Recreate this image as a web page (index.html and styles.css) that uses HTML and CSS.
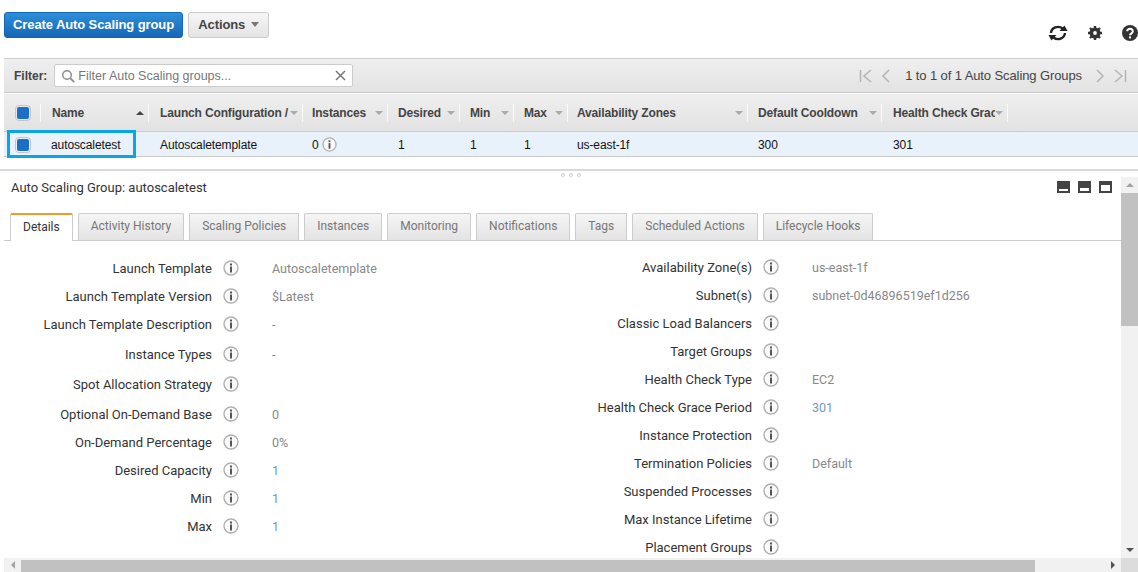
FILE: index.html
```html
<!DOCTYPE html>
<html lang="en">
<head>
    <meta charset="utf-8">
    <title>Auto Scaling Groups</title>
    <link rel="stylesheet" href="styles.css">
</head>
<body>
<svg class="defs" width="0" height="0">
    <symbol id="info" viewBox="0 0 16 16">
        <circle cx="8" cy="8" r="7" fill="#fafafa" stroke="#b0b0b0" stroke-width="1.4"/>
        <rect x="7" y="3.5" width="2" height="2" fill="#555"/>
        <rect x="7" y="6.5" width="2" height="6" fill="#555"/>
    </symbol>
</svg>
<div class="page">
    <div class="toolbar">
        <button class="btn btn-primary">Create Auto Scaling group</button>
        <button class="btn btn-default">Actions <span class="caret"></span></button>
        <div class="tools">
            <svg width="20" height="20" viewBox="0 0 20 20">
                <path d="M3 10a7 6.5 0 0 1 11.5-4.5" fill="none" stroke="#222" stroke-width="2.4"/>
                <path d="M17 10a7 6.5 0 0 1-11.5 4.5" fill="none" stroke="#222" stroke-width="2.4"/>
                <path d="M11.5 8h8l-3-5.500z" fill="#222"/>
                <path d="M8.500 12h-8l3 5.500z" fill="#222"/>
            </svg>
            <svg width="16" height="16" viewBox="0 0 16 16">
                <circle cx="8" cy="8" r="3.8" fill="none" stroke="#333" stroke-width="3.4"/>
                <path d="M8 1v14M1 8h14M3 3l10 10M13 3L3 13" stroke="#333" stroke-width="2.4"/>
                <circle cx="8" cy="8" r="1.9" fill="#fff"/>
            </svg>
            <svg width="16" height="16" viewBox="0 0 16 16">
                <circle cx="8" cy="8" r="8" fill="#333"/>
                <path d="M5.2 6.2a2.8 2.5 0 1 1 4.3 2.1c-.9.6-1.5 1-1.5 2" fill="none" stroke="#fff" stroke-width="2"/>
                <rect x="7" y="11.4" width="2" height="2" fill="#fff"/>
            </svg>
        </div>
    </div>

    <div class="filter-bar">
        <span class="filter-label">Filter:</span>
        <div class="filter-box">
            <svg width="14" height="14" viewBox="0 0 14 14">
                <circle cx="6" cy="6" r="4.3" fill="none" stroke="#8a8a8a" stroke-width="1.4"/>
                <path d="M9.2 9.2l4 4" stroke="#8a8a8a" stroke-width="1.8"/>
            </svg>
            <span class="filter-text">Filter Auto Scaling groups...</span>
            <svg class="filter-clear" width="11" height="11" viewBox="0 0 11 11">
                <path d="M1 1l9 9M10 1l-9 9" stroke="#777" stroke-width="1.5"/>
            </svg>
        </div>
        <div class="pager">
            <svg width="14" height="14" viewBox="0 0 14 14"><path d="M1.5 1v12M12 1L5 7l7 6" fill="none" stroke="#b4b4b4" stroke-width="1.5"/></svg>
            <svg class="pager-prev" width="10" height="14" viewBox="0 0 10 14"><path d="M8 1L2 7l6 6" fill="none" stroke="#b4b4b4" stroke-width="1.5"/></svg>
            <span class="pager-text">1 to 1 of 1 Auto Scaling Groups</span>
            <svg class="pager-next" width="10" height="14" viewBox="0 0 10 14"><path d="M2 1l6 6-6 6" fill="none" stroke="#b4b4b4" stroke-width="1.5"/></svg>
            <svg width="14" height="14" viewBox="0 0 14 14"><path d="M12.5 1v12M2 1l7 6-7 6" fill="none" stroke="#b4b4b4" stroke-width="1.5"/></svg>
        </div>
    </div>

    <div class="grid-head">
        <div class="col col-check"><span class="check"></span></div>
        <div class="col pad-wide">Name<span class="sort-up"></span></div>
        <div class="col pad-wide"><span class="col-text">Launch Configuration /</span><span class="sort"></span></div>
        <div class="col pad-thin">Instances<span class="sort"></span></div>
        <div class="col">Desired<span class="sort"></span></div>
        <div class="col">Min<span class="sort"></span></div>
        <div class="col">Max<span class="sort"></span></div>
        <div class="col pad-thin">Availability Zones<span class="sort"></span></div>
        <div class="col">Default Cooldown<span class="sort"></span></div>
        <div class="col pad-wide"><span class="col-text">Health Check Grace Period</span><span class="sort"></span></div>
    </div>

    <div class="grid-row">
        <div class="cell cell-check"><span class="check"></span></div>
        <div class="cell">autoscaletest</div>
        <div class="cell pad-wide">Autoscaletemplate</div>
        <div class="cell pad-thin">0 <svg class="cell-info" width="15" height="15"><use href="#info"/></svg></div>
        <div class="cell">1</div>
        <div class="cell">1</div>
        <div class="cell">1</div>
        <div class="cell pad-thin">us-east-1f</div>
        <div class="cell">300</div>
        <div class="cell pad-wide">301</div>
        <div class="highlight"></div>
    </div>

    <div class="splitter"><span></span><span></span><span></span></div>

    <div class="detail">
        <div class="detail-main">
            <div class="detail-head">
                <span class="detail-title">Auto Scaling Group: autoscaletest</span>
                <div class="layout-icons">
                    <span class="layout-icon layout-small"></span>
                    <span class="layout-icon layout-mid"></span>
                    <span class="layout-icon layout-big"></span>
                </div>
            </div>
            <div class="tabs">
                <span class="tab tab-active">Details</span>
                <span class="tab">Activity History</span>
                <span class="tab">Scaling Policies</span>
                <span class="tab">Instances</span>
                <span class="tab">Monitoring</span>
                <span class="tab">Notifications</span>
                <span class="tab">Tags</span>
                <span class="tab">Scheduled Actions</span>
                <span class="tab">Lifecycle Hooks</span>
            </div>
            <div class="props">
                <div class="prop-col prop-left">
                    <div class="prop"><span class="prop-label">Launch Template</span><svg class="i" width="16" height="16"><use href="#info"/></svg><span class="prop-value">Autoscaletemplate</span></div>
                    <div class="prop"><span class="prop-label">Launch Template Version</span><svg class="i" width="16" height="16"><use href="#info"/></svg><span class="prop-value">$Latest</span></div>
                    <div class="prop"><span class="prop-label">Launch Template Description</span><svg class="i" width="16" height="16"><use href="#info"/></svg><span class="prop-value">-</span></div>
                    <div class="prop prop-gap"><span class="prop-label">Instance Types</span><svg class="i" width="16" height="16"><use href="#info"/></svg><span class="prop-value">-</span></div>
                    <div class="prop prop-gap"><span class="prop-label">Spot Allocation Strategy</span><svg class="i" width="16" height="16"><use href="#info"/></svg><span class="prop-value"></span></div>
                    <div class="prop prop-gap"><span class="prop-label">Optional On-Demand Base</span><svg class="i" width="16" height="16"><use href="#info"/></svg><span class="prop-value">0</span></div>
                    <div class="prop"><span class="prop-label">On-Demand Percentage</span><svg class="i" width="16" height="16"><use href="#info"/></svg><span class="prop-value">0%</span></div>
                    <div class="prop"><span class="prop-label">Desired Capacity</span><svg class="i" width="16" height="16"><use href="#info"/></svg><span class="prop-value link">1</span></div>
                    <div class="prop"><span class="prop-label">Min</span><svg class="i" width="16" height="16"><use href="#info"/></svg><span class="prop-value link">1</span></div>
                    <div class="prop"><span class="prop-label">Max</span><svg class="i" width="16" height="16"><use href="#info"/></svg><span class="prop-value link">1</span></div>
                </div>
                <div class="prop-col prop-right">
                    <div class="prop"><span class="prop-label">Availability Zone(s)</span><svg class="i" width="16" height="16"><use href="#info"/></svg><span class="prop-value">us-east-1f</span></div>
                    <div class="prop"><span class="prop-label">Subnet(s)</span><svg class="i" width="16" height="16"><use href="#info"/></svg><span class="prop-value">subnet-0d46896519ef1d256</span></div>
                    <div class="prop"><span class="prop-label">Classic Load Balancers</span><svg class="i" width="16" height="16"><use href="#info"/></svg><span class="prop-value"></span></div>
                    <div class="prop"><span class="prop-label">Target Groups</span><svg class="i" width="16" height="16"><use href="#info"/></svg><span class="prop-value"></span></div>
                    <div class="prop"><span class="prop-label">Health Check Type</span><svg class="i" width="16" height="16"><use href="#info"/></svg><span class="prop-value">EC2</span></div>
                    <div class="prop"><span class="prop-label">Health Check Grace Period</span><svg class="i" width="16" height="16"><use href="#info"/></svg><span class="prop-value link">301</span></div>
                    <div class="prop"><span class="prop-label">Instance Protection</span><svg class="i" width="16" height="16"><use href="#info"/></svg><span class="prop-value"></span></div>
                    <div class="prop"><span class="prop-label">Termination Policies</span><svg class="i" width="16" height="16"><use href="#info"/></svg><span class="prop-value">Default</span></div>
                    <div class="prop"><span class="prop-label">Suspended Processes</span><svg class="i" width="16" height="16"><use href="#info"/></svg><span class="prop-value"></span></div>
                    <div class="prop"><span class="prop-label">Max Instance Lifetime</span><svg class="i" width="16" height="16"><use href="#info"/></svg><span class="prop-value"></span></div>
                    <div class="prop"><span class="prop-label">Placement Groups</span><svg class="i" width="16" height="16"><use href="#info"/></svg><span class="prop-value"></span></div>
                </div>
            </div>
        </div>
        <div class="vscroll">
            <span class="vscroll-up"></span>
            <span class="vscroll-thumb"></span>
            <span class="vscroll-down"></span>
        </div>
    </div>

    <div class="hscroll">
        <span class="hscroll-left"></span>
        <span class="hscroll-thumb"></span>
        <span class="hscroll-right"></span>
        <span class="hscroll-corner"></span>
    </div>
</div>
</body>
</html>
```

FILE: styles.css
```css
* {
    box-sizing: border-box;
}

html, body {
    margin: 0;
    padding: 0;
    background: #fff;
}

.defs {
    position: absolute;
}

.page {
    width: 1138px;
    height: 572px;
    overflow: hidden;
    display: flex;
    flex-direction: column;
    padding-left: 4px;
    font-family: "Liberation Sans", Arial, sans-serif;
    font-size: 12px;
    color: #111;
}

/* top buttons */
.toolbar {
    height: 58px;
    flex: none;
    display: flex;
    align-items: flex-start;
    padding-top: 12px;
}

.btn {
    height: 26px;
    padding: 0 0 2px;
    border-radius: 3px;
    font-family: inherit;
    font-size: 13px;
    font-weight: bold;
    letter-spacing: -0.1px;
}

.btn-primary {
    width: 179px;
    color: #fff;
    border: 1px solid #1166bb;
    background: linear-gradient(#2d8fdb, #1566b7);
}

.btn-default {
    width: 81px;
    margin-left: 5px;
    color: #444;
    border: 1px solid #ccc;
    background: linear-gradient(#f6f6f6, #e4e4e4);
}

.caret {
    display: inline-block;
    margin-left: 2px;
    vertical-align: 2px;
    border-style: solid;
    border-width: 5px 4px 0;
    border-color: #777 transparent transparent;
}

.tools {
    margin-left: auto;
    margin-top: 11px;
    width: 90px;
    display: flex;
    align-items: center;
    gap: 19px;
}

/* filter */
.filter-bar {
    height: 35px;
    flex: none;
    display: flex;
    align-items: center;
    padding: 0 11px 0 10px;
    border-top: 1px solid #ccc;
    border-bottom: 1px solid #ccc;
    background: linear-gradient(#efefef, #e3e3e3);
}

.filter-label {
    font-weight: bold;
    color: #444;
}

.filter-box {
    width: 299px;
    height: 23px;
    margin-left: 7px;
    padding: 0 6px;
    display: flex;
    align-items: center;
    background: #fff;
    border: 1px solid #ccc;
    border-radius: 2px;
}

.filter-text {
    margin-left: 3px;
    font-size: 12.5px;
    color: #777;
}

.filter-clear {
    margin-left: auto;
}

.pager {
    margin-left: auto;
    display: flex;
    align-items: center;
    color: #444;
}

.pager-prev {
    margin-left: 8px;
}

.pager-text {
    margin: 0 13px 0 14px;
    font-size: 13px;
    letter-spacing: -0.1px;
}

.pager-next {
    margin-right: 8px;
}

/* grid */
.grid-head,
.grid-row {
    display: grid;
    grid-template-columns: 37px 108px 154px 85px 72px 54px 54px 180px 134px 126px;
}

.grid-head {
    height: 39px;
    flex: none;
    align-items: center;
    border-bottom: 1px solid #ccc;
    border-top: 1px solid #fff;
    background: linear-gradient(#efefef, #e2e2e2);
    font-weight: bold;
    letter-spacing: -0.15px;
    color: #444;
}

.col {
    height: 18px;
    padding: 0 4px 0 10px;
    display: flex;
    align-items: center;
    border-right: 1px solid #fafafa;
    white-space: nowrap;
}

.col-text {
    flex: 1;
    min-width: 0;
    overflow: hidden;
}

.sort,
.sort-up {
    margin-left: auto;
    flex: none;
    border-style: solid;
}

.sort {
    border-width: 4px 4px 0;
    border-color: #aaa transparent transparent;
}

.sort-up {
    border-width: 0 4px 4px;
    border-color: transparent transparent #444;
}

.check {
    display: block;
    width: 16px;
    height: 16px;
    padding: 1px;
    background: #1d6fc6 content-box;
    border: 1px solid #c4c4c4;
    border-radius: 4px;
}

.grid-row {
    position: relative;
    height: 25px;
    flex: none;
    align-items: center;
    background: #e9f1fb;
    border-bottom: 1px solid #ccc;
    letter-spacing: -0.1px;
}

.cell {
    padding: 1px 0 0 10px;
    display: flex;
    align-items: center;
    white-space: nowrap;
}

.col.pad-wide,
.cell.pad-wide {
    padding-left: 11px;
}

.col.pad-thin,
.cell.pad-thin {
    padding-left: 9px;
}

.col-check,
.cell-check {
    padding-left: 11px;
}

.cell-info {
    margin-left: 3px;
}

/* selected row outline */
.highlight {
    position: absolute;
    left: 3px;
    top: -2px;
    width: 129px;
    height: 28px;
    border: 3px solid #0aa5e4;
}

.splitter {
    height: 8px;
    flex: none;
    display: flex;
    justify-content: center;
    gap: 4px;
    padding: 2px 0 0 4px;
    margin: 12px 0 0 -4px;
    border-top: 2px solid #d8d8d8;
}

.splitter span {
    width: 4px;
    height: 4px;
    border: 1px solid #ccc;
    border-radius: 50%;
}

/* lower pane */
.detail {
    flex: 1;
    min-height: 0;
    display: flex;
    font-family: Roboto, "Liberation Sans", sans-serif;
    font-size: 13px;
}

.detail-main {
    flex: 1;
    min-width: 0;
    overflow: hidden;
}

.detail-head {
    display: flex;
    align-items: center;
    height: 20px;
    padding: 0 9px 0 7px;
}

.detail-title {
    color: #333;
}

.layout-icons {
    margin-left: auto;
    display: flex;
    gap: 8px;
}

.layout-icon {
    width: 13px;
    height: 12px;
    background: #444;
    display: flex;
    align-items: flex-end;
    padding: 0 2px 2px;
}

.layout-icon::after {
    content: "";
    width: 100%;
    background: #fff;
}

.layout-small::after {
    height: 2px;
}

.layout-mid::after {
    height: 3px;
}

.layout-big::after {
    height: 6px;
}

.tabs {
    margin-top: 16px;
    height: 28px;
    display: flex;
    gap: 5px;
    padding-left: 6px;
    border-bottom: 1px solid #ccc;
    font-size: 12px;
}

.tab {
    height: 27px;
    padding: 0 12px 2px;
    display: flex;
    align-items: center;
    color: #777;
    border: 1px solid #ccc;
    border-bottom: 0;
    border-radius: 2px 2px 0 0;
    background: linear-gradient(#f5f5f5, #e3e3e3);
}

.tab-active {
    height: 28px;
    color: #333;
    background: #fff;
    border-top: 2px solid #ec9c2a;
}

.props {
    display: flex;
    padding-top: 13px;
}

.prop-left {
    width: 540px;
}

.prop-right {
    margin-top: -1px;
}

.prop-col {
    flex: none;
}

.prop {
    height: 28px;
    display: flex;
    align-items: center;
}

.prop-gap {
    margin-top: 2px;
}

.prop-label {
    width: 208px;
    text-align: right;
    color: #333;
    white-space: nowrap;
}

.i {
    margin: 0 33px 0 11px;
    flex: none;
}

.prop-value {
    font-size: 12.5px;
    color: #888;
}

.link {
    color: #6b9bc4;
}

/* fake scrollbars */
.vscroll {
    width: 17px;
    flex: none;
    display: flex;
    flex-direction: column;
    background: #f1f1f1;
}

.vscroll-up,
.vscroll-down {
    height: 16px;
    flex: none;
    display: flex;
    align-items: center;
    justify-content: center;
}

.vscroll-up::after,
.vscroll-down::after {
    content: "";
    border-style: solid;
}

.vscroll-up::after {
    border-width: 0 4px 4px;
    border-color: transparent transparent #a3a3a3;
}

.vscroll-down::after {
    border-width: 4px 4px 0;
    border-color: #505050 transparent transparent;
}

.vscroll-thumb {
    height: 133px;
    background: #c1c1c1;
}

.vscroll-down {
    margin-top: auto;
}

.hscroll {
    height: 14px;
    flex: none;
    display: flex;
    background: #f1f1f1;
}

.hscroll-left,
.hscroll-right {
    width: 17px;
    flex: none;
    display: flex;
    align-items: center;
    justify-content: center;
}

.hscroll-right {
    margin-left: auto;
}

.hscroll-left::after,
.hscroll-right::after {
    content: "";
    border-style: solid;
}

.hscroll-left::after {
    border-width: 4px 4px 4px 0;
    border-color: transparent #a3a3a3 transparent transparent;
}

.hscroll-right::after {
    border-width: 4px 0 4px 4px;
    border-color: transparent transparent transparent #505050;
}

.hscroll-thumb {
    width: 1014px;
    margin-top: 2px;
    background: #c1c1c1;
}

.hscroll-corner {
    width: 17px;
    flex: none;
    background: #dcdcdc;
}
```
